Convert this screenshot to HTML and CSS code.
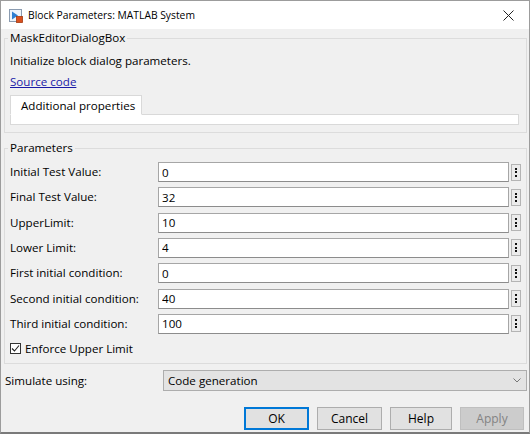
FILE: index.html
```html
<!DOCTYPE html>
<html lang="en">
<head>
    <meta charset="UTF-8">
    <meta name="viewport" content="width=device-width, initial-scale=1.0">
    <title>Block Parameters: MATLAB System</title>
    <link rel="stylesheet" href="styles.css">
</head>
<body>
    <div class="window">
        <div class="titlebar">
            <svg class="app-icon" width="14" height="14" viewBox="0 0 14 14">
                <rect x="0.5" y="0.5" width="12" height="12" fill="#eef4fa" stroke="#8a9bb0"/>
                <path d="M3 2.5 L9 6.5 L3 10.5 Z" fill="#2f7fd0"/>
                <rect x="7.5" y="7.5" width="6" height="6" fill="#d9501e" stroke="#a33a10" stroke-width="0.8"/>
            </svg>
            <span class="title">Block Parameters: MATLAB System</span>
            <svg class="close" width="11" height="11" viewBox="0 0 11 11">
                <path d="M0.5 0.5 L10.5 10.5 M10.5 0.5 L0.5 10.5" stroke="#222" stroke-width="1"/>
            </svg>
        </div>

        <div class="content">
            <fieldset class="group mask">
                <legend>MaskEditorDialogBox</legend>
                <div class="mask-body">
                    <p class="desc">Initialize block dialog parameters.</p>
                    <a class="source-link" href="#">Source code</a>
                    <div class="tabs">
                        <div class="tab active">Additional properties</div>
                    </div>
                    <div class="tab-panel"></div>
                </div>
            </fieldset>

            <fieldset class="group params">
                <legend>Parameters</legend>
                <div class="param-grid">
                    <label>Initial Test Value:</label>
                    <input type="text" value="0">
                    <button class="more"><span></span><span></span><span></span></button>

                    <label>Final Test Value:</label>
                    <input type="text" value="32">
                    <button class="more"><span></span><span></span><span></span></button>

                    <label>UpperLimit:</label>
                    <input type="text" value="10">
                    <button class="more"><span></span><span></span><span></span></button>

                    <label>Lower Limit:</label>
                    <input type="text" value="4">
                    <button class="more"><span></span><span></span><span></span></button>

                    <label>First initial condition:</label>
                    <input type="text" value="0">
                    <button class="more"><span></span><span></span><span></span></button>

                    <label>Second initial condition:</label>
                    <input type="text" value="40">
                    <button class="more"><span></span><span></span><span></span></button>

                    <label>Third initial condition:</label>
                    <input type="text" value="100">
                    <button class="more"><span></span><span></span><span></span></button>
                </div>
                <div class="check-row">
                    <span class="checkbox">
                        <svg width="9" height="9" viewBox="0 0 9 9">
                            <path d="M1 4.5 L3.5 7 L8 1.5" fill="none" stroke="#222" stroke-width="1.1"/>
                        </svg>
                    </span>
                    <span>Enforce Upper Limit</span>
                </div>
            </fieldset>

            <div class="simulate">
                <span class="sim-label">Simulate using:</span>
                <div class="select">
                    <span>Code generation</span>
                    <svg width="8" height="5" viewBox="0 0 8 5">
                        <path d="M0.5 0.5 L4 4 L7.5 0.5" fill="none" stroke="#777" stroke-width="1"/>
                    </svg>
                </div>
            </div>

            <div class="buttons">
                <button class="btn default">OK</button>
                <button class="btn">Cancel</button>
                <button class="btn help">Help</button>
                <button class="btn disabled">Apply</button>
            </div>
        </div>
    </div>
</body>
</html>
```

FILE: styles.css
```css
body {
    margin: 0;
    background-color: #f0f0f0;
    font-family: "Open Sans", "Noto Sans", sans-serif;
    font-size: 11.6px;
    color: #000;
}
.window {
    width: 530px;
    height: 434px;
    box-sizing: border-box;
    border: 1px solid #9c9c9c;
    border-bottom: 2px solid #7a7a7a;
    background-color: #f0f0f0;
    overflow: hidden;
}
.titlebar {
    display: flex;
    align-items: center;
    height: 28px;
    background-color: #fff;
    padding: 0 15px 0 8px;
}
.app-icon {
    margin-right: 5px;
    margin-top: 1px;
}
.title {
    flex: 1;
    font-size: 10.3px;
}
.close {
    margin-top: 1px;
}
.content {
    padding: 1px 2px 0 3px;
}
.group {
    margin: 0;
    padding: 0;
    border: 1px solid #dcdcdc;
    min-width: 0;
}
.group legend {
    margin-left: 3px;
    padding: 0 2px;
    line-height: 16px;
}
.mask-body {
    padding: 7px 7px 7px 5px;
}
.desc {
    margin: 0;
    line-height: 16px;
}
.source-link {
    display: inline-block;
    margin-top: 5px;
    line-height: 16px;
    color: #1a1aa8;
    text-decoration: underline;
}
.tabs {
    display: flex;
    margin-top: 5px;
    border-bottom: 1px solid #d9d9d9;
}
.tab {
    height: 20px;
    box-sizing: border-box;
    margin-bottom: -1px;
    padding: 0 6px 0 10px;
    line-height: 19px;
    white-space: nowrap;
    border: 1px solid #d9d9d9;
    border-bottom: 1px solid #fff;
    background-color: #fff;
}
.tab-panel {
    height: 10px;
    box-sizing: border-box;
    background-color: #fff;
    border: 1px solid #d9d9d9;
    border-top: none;
}
.params {
    margin-top: 7px;
}
.param-grid {
    display: grid;
    grid-template-columns: 148px 1fr 10px;
    row-gap: 5.33px;
    align-items: center;
    padding: 6px 5px 0 5px;
}
.param-grid label {
    line-height: 16px;
}
.param-grid input {
    height: 20px;
    box-sizing: border-box;
    margin: 0 2px 0 0;
    padding: 0 3px;
    border: 1px solid #a6a6a6;
    border-bottom-color: #8c8c8c;
    background-color: #fff;
    font-family: inherit;
    font-size: inherit;
    color: #000;
    outline: none;
}
.more {
    width: 10px;
    height: 17px;
    padding: 0;
    border: 1px solid #b4b4b4;
    background-color: #ebebeb;
    display: flex;
    flex-direction: column;
    align-items: center;
    justify-content: center;
    gap: 1.5px;
}
.more span {
    width: 2px;
    height: 2px;
    background-color: #111;
}
.check-row {
    display: flex;
    align-items: center;
    gap: 4px;
    padding: 7px 5px 6px 5px;
    line-height: 16px;
}
.checkbox {
    width: 11px;
    height: 11px;
    box-sizing: border-box;
    border: 1px solid #333;
    background-color: #fff;
    display: flex;
    align-items: center;
    justify-content: center;
}
.simulate {
    display: flex;
    align-items: center;
    margin-top: 6px;
    padding-left: 1px;
}
.sim-label {
    width: 158px;
}
.select {
    flex: 1;
    height: 21px;
    box-sizing: border-box;
    display: flex;
    align-items: center;
    justify-content: space-between;
    padding: 0 5px 0 4px;
    border: 1px solid #adadad;
    background-color: #e3e3e3;
}
.buttons {
    display: flex;
    justify-content: flex-end;
    gap: 8px;
    margin-top: 16px;
    padding-right: 3px;
}
.btn {
    width: 65px;
    height: 23px;
    padding: 0;
    border: 1px solid #adadad;
    background-color: #e1e1e1;
    font-family: inherit;
    font-size: 12px;
    color: #000;
}
.btn.help {
    width: 62px;
}
.btn.default {
    border: 1px solid #0078d7;
    box-shadow: inset 0 0 0 1px #0078d7;
}
.btn.disabled {
    width: 64px;
    background-color: #cccccc;
    border-color: #bfbfbf;
    color: #838383;
}
```
